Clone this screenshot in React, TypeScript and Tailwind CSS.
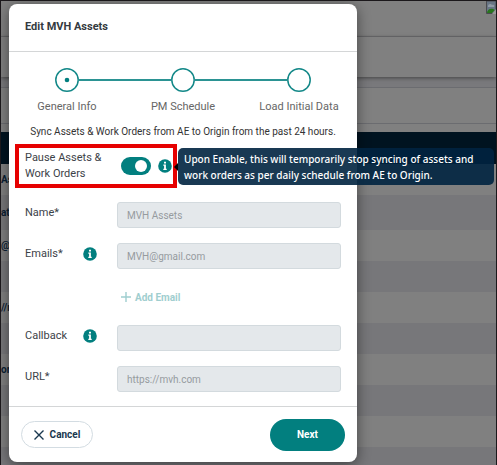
import type { ReactNode } from "react";

const tableRows = ["As", "at", "@g", "", "//r", "", "or", "", "", ""];

function InfoIcon({ label }: { label: string }) {
  return (
    <svg viewBox="0 0 14 14" className="h-3.5 w-3.5 shrink-0" role="img" aria-label={label}>
      <circle cx="7" cy="7" r="6.8" fill="#027f7f" />
      <path d="M6 2.7h2v1.8H6zM5.3 5.6h2.6v4.2h.8V11H5.3V9.8h.8V6.8h-.8z" fill="#fff" />
    </svg>
  );
}

function BrokenImage() {
  return (
    <svg viewBox="0 0 10 13" className="h-[13px] w-2.5" aria-hidden="true">
      <path d="M.5 0v12.5H8L10 10V0z" fill="#687585" stroke="#4b4b50" />
      <path d="M2 5c0-2 3-3 4-1 2-1 3 1 2 2H2z" fill="#909aa5" />
      <path d="M1 12c0-3 3-5 6-4l2 1-3 3z" fill="#28751d" />
      <path d="M6 13l4-5v5z" fill="#999" />
    </svg>
  );
}

function Backdrop() {
  return (
    <div className="flex min-w-0 flex-col overflow-hidden bg-[#808080]" aria-hidden="true">
      <div className="flex h-9 shrink-0 justify-end border-b border-[#6c6c6f]">
        <BrokenImage />
      </div>
      <div className="z-10 h-10 shrink-0 bg-[#808080] shadow-[0_1px_4px_#444]" />
      <div className="h-2.5 shrink-0 bg-[#79797c]" />
      <div className="h-[37px] shrink-0 border-y border-[#6b6c70]" />
      <div className="h-2 shrink-0" />
      <div className="h-8 shrink-0 bg-[#001320]" />
      {tableRows.map((text, i) => (
        <div
          key={i}
          className={`flex shrink-0 items-center text-[10px] font-bold text-[#0b2033] even:bg-[#77777a] ${
            i === 1 ? "h-[35px]" : "h-[31px]"
          }`}
        >
          {text}
        </div>
      ))}
    </div>
  );
}

function Step({ label, active, position }: { label: string; active?: boolean; position: "first" | "mid" | "last" }) {
  return (
    <li className="flex flex-col items-center">
      <div className="flex w-full items-center">
        <span className={position === "first" ? "h-0.5 flex-1" : "h-0.5 flex-1 bg-[#2b9393]"} />
        <svg viewBox="0 0 24 24" className="h-6 w-6" aria-hidden="true">
          <circle cx="12" cy="12" r="11.2" fill="none" stroke="#138888" strokeWidth="1.5" />
          {active && <circle cx="12" cy="12" r="2.3" fill="#027f7f" />}
        </svg>
        <span className={position === "last" ? "h-0.5 flex-1" : "h-0.5 flex-1 bg-[#2b9393]"} />
      </div>
      <span className="mt-[7px] text-[11px] leading-4 text-[#666]">{label}</span>
    </li>
  );
}

function Field({ id, label, value, icon }: { id: string; label: string; value: string; icon?: ReactNode }) {
  return (
    <div className="flex h-[26px] items-center">
      <div className="flex w-[92px] items-center pb-1">
        <label htmlFor={id} className="w-[58px] text-[11px] leading-4 text-[#3c4248]">
          {label}
        </label>
        {icon}
      </div>
      <input
        id={id}
        disabled
        defaultValue={value}
        className="h-[26px] min-w-0 flex-1 rounded-[3px] border border-[#d3dade] bg-[#e4e8eb] px-[9px] text-[10px] text-[#969b9f]"
      />
    </div>
  );
}

export default function App() {
  return (
    <div className="grid min-h-screen grid-cols-1 overflow-hidden border border-[#1b181b] font-['Roboto',sans-serif]">
      <div className="relative col-start-1 row-start-1 grid min-w-0">
        <div className="absolute inset-0 grid">
          <Backdrop />
        </div>
      </div>
      <section
        role="dialog"
        aria-labelledby="dialog-title"
        className="relative z-20 col-start-1 row-start-1 mx-2 my-[3px] w-[348px] max-w-full self-start rounded-lg bg-white shadow-[0_3px_14px_#0007]"
      >
        <header className="flex h-12 items-center border-b border-[#d4d6d7] px-4">
          <h1 id="dialog-title" className="text-[11px] font-bold text-[#343a40]">
            Edit MVH Assets
          </h1>
        </header>

        <ol className="grid grid-cols-3 pt-4">
          <Step label="General Info" active position="first" />
          <Step label="PM Schedule" position="mid" />
          <Step label="Load Initial Data" position="last" />
        </ol>
        <p className="mt-[9px] px-4 text-center text-[10px] leading-4 text-[#333]">
          Sync Assets &amp; Work Orders from AE to Origin from the past 24 hours.
        </p>

        <div className="relative mt-1 ml-1.5 flex h-11 w-[162px] items-center border-4 border-[#e60000] pl-1.5">
          <label htmlFor="pause" className="w-24 pr-2 text-[11px] leading-4 text-[#3c4248]">
            Pause Assets &amp; Work Orders
          </label>
          <span className="relative flex h-[18px] w-[30px] shrink-0">
            <input
              id="pause"
              type="checkbox"
              role="switch"
              defaultChecked
              className="peer h-[18px] w-[30px] appearance-none rounded-full bg-[#027f7f]"
            />
            <span className="pointer-events-none absolute top-[3px] left-[3px] h-3 w-3 rounded-full bg-white peer-checked:left-[14px]" />
          </span>
          <span className="ml-[7px]">
            <InfoIcon label="About pausing" />
          </span>
          <div
            role="tooltip"
            className="absolute top-0 left-[159px] w-[316px] rounded-[5px] bg-[#002440]/90 px-1.5 pt-[3px] pb-0.5 font-['Noto_Sans',sans-serif] text-[10px] leading-4 font-medium text-white"
          >
            <span className="absolute top-[15px] -left-1 border-y-4 border-r-4 border-y-transparent border-r-black" />
            Upon Enable, this will temporarily stop syncing of assets and work orders as per daily schedule from AE to
            Origin.
          </div>
        </div>

        <form id="asset-form" className="mt-3.5 flex flex-col gap-[15px] px-4">
          <Field id="name" label="Name*" value="MVH Assets" />
          <Field id="emails" label="Emails*" value="MVH@gmail.com" icon={<InfoIcon label="About emails" />} />
          <button
            type="button"
            disabled
            className="ml-24 flex h-[26px] items-center gap-1 self-start text-[10px] font-bold text-[#9fcecf]"
          >
            <svg viewBox="0 0 10 10" className="h-2.5 w-2.5" fill="none" stroke="currentColor" strokeWidth="1.4">
              <path d="M5 0v10M0 5h10" />
            </svg>
            Add Email
          </button>
          <Field id="callback" label="Callback" value="" icon={<InfoIcon label="About callback" />} />
          <Field id="url" label="URL*" value="https://mvh.com" />
        </form>

        <footer className="mt-[14px] flex h-14 items-center justify-between border-t border-[#d4d6d7] px-3">
          <button
            type="button"
            className="flex h-[27px] w-[72px] items-center justify-center gap-1.5 rounded-full border border-[#d3dce2] text-[10px] font-bold text-[#19384f]"
          >
            <svg viewBox="0 0 10 10" className="h-2.5 w-2.5" fill="none" stroke="currentColor" strokeWidth="1.4">
              <path d="M.5.5l9 9M9.5.5l-9 9" />
            </svg>
            Cancel
          </button>
          <button type="submit" form="asset-form" className="h-8 w-[75px] rounded-full bg-[#027f7f] text-[10px] font-bold text-white">
            Next
          </button>
        </footer>
      </section>
    </div>
  );
}
